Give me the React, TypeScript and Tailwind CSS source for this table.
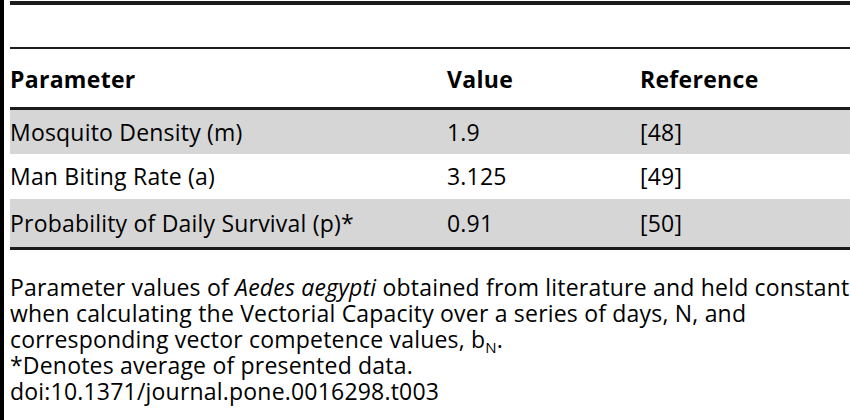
import React from 'react';

const rows = [
    { param: 'Mosquito Density (m)', value: '1.9', ref: '[48]', shaded: true },
    { param: 'Man Biting Rate (a)', value: '3.125', ref: '[49]', shaded: false },
    { param: 'Probability of Daily Survival (p)*', value: '0.91', ref: '[50]', shaded: true },
];

export default function App() {
    return (
        <div className="w-[850px] h-[420px] overflow-hidden bg-white border-l-4 border-black text-black" style={{ fontFamily: '"Open Sans", "Liberation Sans", sans-serif' }}>
            <div className="pl-[6px] pt-[1px]">
                <div className="h-[4px] bg-[#1c1c1c]" />
                <div className="h-[42px]" />
                <div className="h-[2px] bg-[#1c1c1c]" />
                <div className="grid grid-cols-[437px_193px_1fr] h-[58px] items-end pb-[16px] text-[23px] font-bold leading-none tracking-[0.3px]">
                    <div>Parameter</div>
                    <div>Value</div>
                    <div>Reference</div>
                </div>
                <div className="h-[3px] bg-[#1c1c1c]" />
                {rows.map((r, i) => (
                    <div key={i} className={`grid grid-cols-[437px_193px_1fr] items-center text-[23px] tracking-[0.2px] ${i === 2 ? 'h-[48px]' : i === 1 ? 'h-[45px]' : 'h-[44px]'} ${r.shaded ? 'bg-[#d6d6d6]' : ''}`}>
                        <div>{r.param}</div>
                        <div>{r.value}</div>
                        <div>{r.ref}</div>
                    </div>
                ))}
                <div className="h-[3px] bg-[#1c1c1c]" />
                <div className="pt-[24px] text-[23px] leading-[26px] tracking-[0.2px]">
                    <p>
                        Parameter values of <i>Aedes aegypti</i> obtained from literature and held constant when calculating the Vectorial Capacity over a series of days, N, and corresponding vector competence values, b<span className="relative top-[5px] text-[15px] leading-none">N</span>.
                    </p>
                    <p>*Denotes average of presented data.</p>
                    <p>doi:10.1371/journal.pone.0016298.t003</p>
                </div>
            </div>
        </div>
    );
}
